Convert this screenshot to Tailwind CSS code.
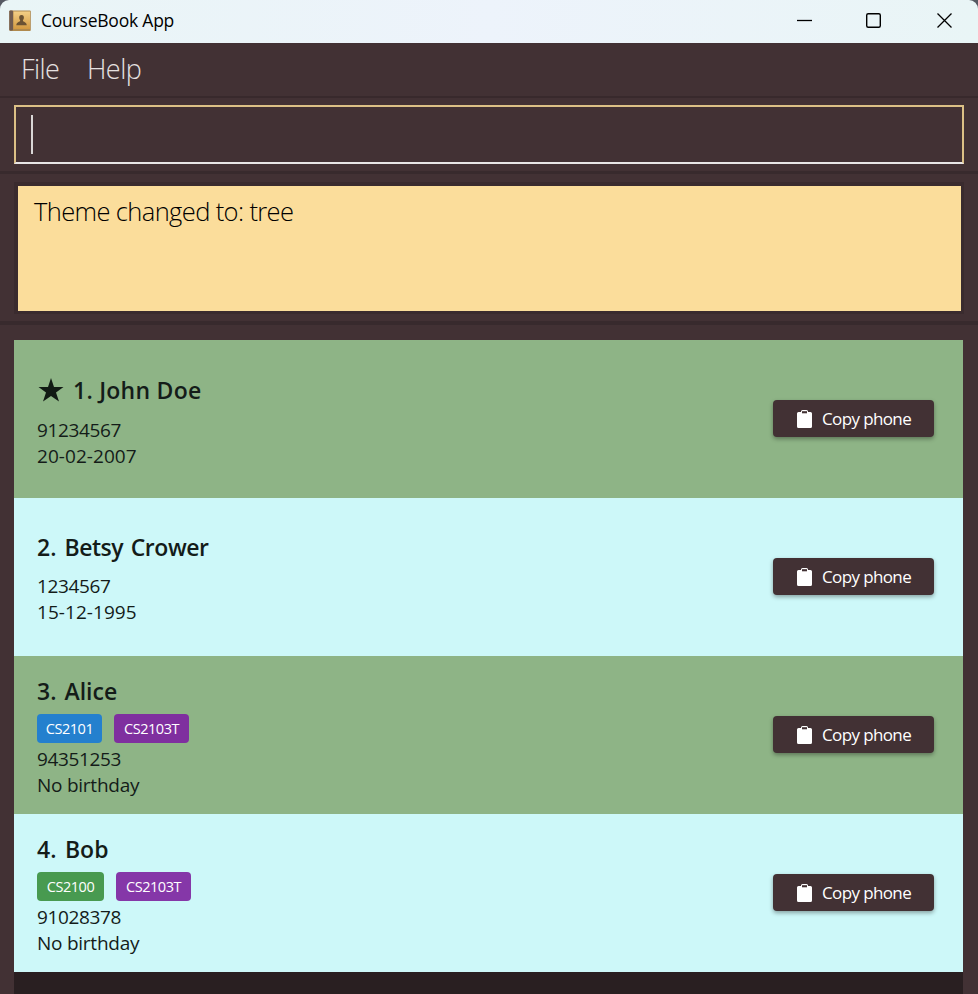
<!DOCTYPE html>
<html lang="en">
<head>
<meta charset="utf-8">
<title>CourseBook App</title>
<script src="https://cdn.jsdelivr.net/npm/@tailwindcss/browser@4"></script>
</head>
<body class="w-[978px] h-[994px] overflow-hidden bg-[#423134] font-['Open_Sans','Noto_Sans',sans-serif] whitespace-nowrap">
<svg class="hidden">
  <symbol id="clip" viewBox="0 0 15 18"><path d="M1.500 2H4V1.500Q4 0 5.500 0H9.500Q11 0 11 1.500V2H13.500Q15 2 15 3.500V16.500Q15 18 13.500 18H1.500Q0 18 0 16.500V3.500Q0 2 1.500 2Z" fill="#fff"/><path d="M5 1.200H10V3.300H5Z" fill="#423134"/></symbol>
</svg>
<div class="flex flex-col h-full">
  <header class="h-[43px] bg-[#555962] shrink-0">
    <div class="h-full flex items-center rounded-t-[9px] bg-linear-to-r from-[#e9f5f6] via-[#edf3fb] to-[#e9f5f6] pl-[9px]">
      <svg class="w-[22px] h-[22px] -mt-[2px]" viewBox="0 0 22 22">
        <defs><linearGradient id="g" x1="0" y1="0" x2="0" y2="1"><stop offset="0" stop-color="#f3cf86"/><stop offset="1" stop-color="#d39a41"/></linearGradient></defs>
        <rect x="0.300" y="0.500" width="21.500" height="20.500" rx="1" fill="#b08a4e"/>
        <rect x="0.300" y="0.500" width="3.700" height="20" rx="1" fill="#6f5b50"/>
        <rect x="4.500" y="1.500" width="16.500" height="17.500" fill="url(#g)"/>
        <path d="M12.500 5C14.300 5 15 6.300 14.900 7.800C14.800 9.100 14 9.900 13.900 10.800C14.200 12 17.600 12 17.800 15.300H7.300C7.400 12 10.900 12 11.200 10.800C11.100 9.900 10.300 9.100 10.200 7.800C10.100 6.300 10.800 5 12.500 5Z" fill="#6a5233"/>
      </svg>
      <span class="ml-[10px] text-[17.500px] leading-6 -mt-[4px] tracking-[-0.220px] text-black">CourseBook App</span>
      <svg class="w-[158px] h-[20px] ml-auto mr-[24px] -mt-[3px]" viewBox="0 0 158 20" fill="none" stroke="#000" stroke-width="1.300">
        <path d="M1 10.500H16"/><rect x="70.700" y="3.700" width="13.600" height="13.600" rx="1.500" stroke-width="1.400"/><path d="M141.500 3.500L155.500 17.500M155.500 3.500L141.500 17.500"/>
      </svg>
    </div>
  </header>
  <nav class="h-[55px] shrink-0 border-b-2 border-[#38292c] flex items-center pb-[2px] pl-[21px] text-[27px] font-light leading-9 text-[#e6e1e1]">
    <span class="w-[66px] tracking-[-0.600px]">File</span><span class="tracking-[-0.550px]">Help</span>
  </nav>
  <section class="h-[76px] shrink-0 border-b-3 border-[#382a2d] pt-[7px] px-[14px]">
    <div class="h-[59px] border-2 border-t-[#dcc086] border-x-[#dcc086] border-b-[#e8e5e6] pl-[15px] pt-[8px]"><div class="w-[2px] h-[39px] bg-[#d9d6d6]"></div></div>
  </section>
  <section class="h-[151px] shrink-0 border-b-4 border-[#382a2d] pt-[8px] px-[14px]">
    <div class="h-[132px] border-4 border-r-3 border-b-3 border-[#3a2b2e] bg-[#fbdd9b] pl-[16px] pt-[7px] text-[25.500px] font-light leading-9 tracking-[-0.620px] text-black">Theme changed to: tree</div>
  </section>
  <main class="flex-1 mt-[15px] ml-[14px] mr-[15px] bg-[#291f21] text-[#141c19]">
    <article class="h-[158px] bg-[#8eb486] flex justify-between pl-[23px] pr-[29px]">
      <div class="pt-[34px]">
        <h2 class="flex items-center text-[23px] font-semibold leading-8 tracking-[0.250px]"><svg class="w-[26px] h-[24px] ml-px mr-[9px]" viewBox="0 0 26 24"><path d="M13 0L16 9H25.500L18 14.500L21 23.500L13 18L5 23.500L8 14.500L0.500 9H10Z" fill="#111a14"/></svg>1. John Doe</h2>
        <p class="mt-[11px] text-[19px] leading-[26px] tracking-[-0.350px]">91234567<br><span class="tracking-[0.050px]">20-02-2007</span></p>
      </div>
      <button class="mt-[60px] w-[161px] h-[37px] rounded-[4px] bg-[#423134] shadow-[0_2px_4px_rgba(0,0,0,0.35)] flex items-center pl-[24px] text-white text-[17px] tracking-[-0.620px]"><svg class="w-[15px] h-[18px] mr-[10px] mt-px"><use href="#clip"/></svg><span>Copy phone</span></button>
    </article>
    <article class="h-[158px] bg-[#cdf8f9] flex justify-between pl-[23px] pr-[29px]">
      <div class="pt-[33px]">
        <h2 class="text-[23px] font-semibold leading-8 tracking-[-0.450px] [word-spacing:2px]"><span class="tracking-normal">2. </span>Betsy Crower</h2>
        <p class="mt-[10px] text-[19px] leading-[26px] tracking-[-0.350px]">1234567<br><span class="tracking-[0.050px]">15-12-1995</span></p>
      </div>
      <button class="mt-[60px] w-[161px] h-[37px] rounded-[4px] bg-[#423134] shadow-[0_2px_4px_rgba(0,0,0,0.35)] flex items-center pl-[24px] text-white text-[17px] tracking-[-0.620px]"><svg class="w-[15px] h-[18px] mr-[10px] mt-px"><use href="#clip"/></svg><span>Copy phone</span></button>
    </article>
    <article class="h-[158px] bg-[#8eb486] flex justify-between pl-[23px] pr-[29px]">
      <div class="pt-[19px]">
        <h2 class="text-[23px] font-semibold leading-8 [word-spacing:2px]">3. Alice</h2>
        <div class="mt-[7px] flex gap-[12px] text-white text-[14.500px] tracking-[-0.450px] leading-[29px] h-[29px]"><span class="w-[65px] rounded-[4px] bg-[#2480ce] text-center">CS2101</span><span class="w-[75px] rounded-[4px] bg-[#7f2f9f] text-center">CS2103T</span></div>
        <p class="mt-[3px] text-[19px] leading-[26px] tracking-[-0.350px]">94351253<br><span class="tracking-[-0.250px]">No birthday</span></p>
      </div>
      <button class="mt-[60px] w-[161px] h-[37px] rounded-[4px] bg-[#423134] shadow-[0_2px_4px_rgba(0,0,0,0.35)] flex items-center pl-[24px] text-white text-[17px] tracking-[-0.620px]"><svg class="w-[15px] h-[18px] mr-[10px] mt-px"><use href="#clip"/></svg><span>Copy phone</span></button>
    </article>
    <article class="h-[158px] bg-[#cdf8f9] flex justify-between pl-[23px] pr-[29px]">
      <div class="pt-[19px]">
        <h2 class="text-[23px] font-semibold leading-8 [word-spacing:2.500px]">4. Bob</h2>
        <div class="mt-[7px] flex gap-[12px] text-white text-[14.500px] tracking-[-0.450px] leading-[29px] h-[29px]"><span class="w-[67px] rounded-[4px] bg-[#489a50] text-center">CS2100</span><span class="w-[75px] rounded-[4px] bg-[#8537a8] text-center">CS2103T</span></div>
        <p class="mt-[3px] text-[19px] leading-[26px] tracking-[-0.350px]">91028378<br><span class="tracking-[-0.250px]">No birthday</span></p>
      </div>
      <button class="mt-[60px] w-[161px] h-[37px] rounded-[4px] bg-[#423134] shadow-[0_2px_4px_rgba(0,0,0,0.35)] flex items-center pl-[24px] text-white text-[17px] tracking-[-0.620px]"><svg class="w-[15px] h-[18px] mr-[10px] mt-px"><use href="#clip"/></svg><span>Copy phone</span></button>
    </article>
  </main>
</div>
</body>
</html>
